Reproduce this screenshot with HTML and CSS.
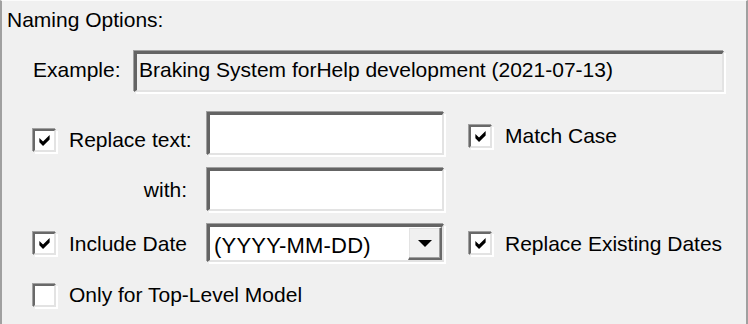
FILE: index.html
```html
<!DOCTYPE html>
<html>
<head>
<meta charset="utf-8">
<link rel="stylesheet" href="styles.css">
</head>
<body>
<div class="panel">
  <div class="title">Naming Options:</div>
  <div class="example-row">
    <span class="example-label">Example:</span>
    <div class="field field-readonly"><span class="field-text">Braking System forHelp development (2021-07-13)</span></div>
  </div>
  <div class="options">
    <div class="opt opt-replace">
      <span class="cb"><svg class="check" viewBox="0 0 7 7.5" width="11" height="11"><polygon points="0,2 2.5,4.5 7,0 7,3 2.5,7.5 0,5" fill="#000"/></svg></span>
      <span class="opt-label">Replace text:</span>
    </div>
    <div class="field input"></div>
    <div class="opt opt-right opt-match">
      <span class="cb"><svg class="check" viewBox="0 0 7 7.5" width="11" height="11"><polygon points="0,2 2.5,4.5 7,0 7,3 2.5,7.5 0,5" fill="#000"/></svg></span>
      <span class="opt-label">Match Case</span>
    </div>

    <div class="with-label">with:</div>
    <div class="field input"></div>
    <div class="empty"></div>

    <div class="opt opt-date">
      <span class="cb"><svg class="check" viewBox="0 0 7 7.5" width="11" height="11"><polygon points="0,2 2.5,4.5 7,0 7,3 2.5,7.5 0,5" fill="#000"/></svg></span>
      <span class="opt-label">Include Date</span>
    </div>
    <div class="field select">
      <span class="select-text">(YYYY-MM-DD)</span>
      <span class="select-btn"><span class="arrow"></span></span>
    </div>
    <div class="opt opt-right opt-dates">
      <span class="cb"><svg class="check" viewBox="0 0 7 7.5" width="11" height="11"><polygon points="0,2 2.5,4.5 7,0 7,3 2.5,7.5 0,5" fill="#000"/></svg></span>
      <span class="opt-label">Replace Existing Dates</span>
    </div>

    <div class="opt opt-top">
      <span class="cb"></span>
      <span class="opt-label">Only for Top-Level Model</span>
    </div>
  </div>
</div>
</body>
</html>
```
FILE: styles.css
```css
html, body {
  margin: 0;
  padding: 0;
  background: #f0f0f0;
}

body {
  font-family: "Liberation Sans", Arial, sans-serif;
  font-size: 21px;
  color: #000;
}

.panel {
  box-sizing: border-box;
  width: 748px;
  height: 324px;
  background: #f0f0f0;
  border-left: 2px solid #a0a0a0;
  border-right: 2px solid #a0a0a0;
  border-top: 1px solid #fbfbfb;
  padding-top: 7px;
  overflow: hidden;
}

.title {
  line-height: 24px;
  padding-left: 5px;
  white-space: nowrap;
}

.example-row {
  display: flex;
  align-items: center;
  margin-top: 19px;
  margin-left: 31px;
  height: 41px;
}

.example-label {
  width: 101px;
  line-height: 24px;
  margin-bottom: 3px;
  white-space: nowrap;
}

.field {
  box-sizing: border-box;
  border-top: 3px solid #646464;
  border-left: 3px solid #646464;
  border-bottom: 2px solid #e3e3e3;
  border-right: 2px solid #e3e3e3;
  box-shadow: -1px -1px 0 0 #a0a0a0, 2px 2px 0 0 #ffffff;
}

.field-readonly {
  width: 590px;
  height: 41px;
  background: #f0f0f0;
  display: flex;
  align-items: center;
  padding-left: 2px;
  padding-bottom: 4px;
}

.field-text {
  line-height: 24px;
  white-space: nowrap;
}

.options {
  display: grid;
  grid-template-columns: 174px 237px auto;
  grid-template-rows: 43px 43px 38px 32px;
  row-gap: 13px;
  margin-top: 20px;
  margin-left: 31px;
}

.input {
  width: 237px;
  height: 43px;
  background: #fff;
}

.opt {
  display: flex;
  align-items: center;
  gap: 13px;
  white-space: nowrap;
}

.opt-label {
  line-height: 24px;
}

.opt-right {
  margin-left: 25px;
}

.opt-replace {
  align-self: start;
  margin-top: 16px;
}

.opt-match {
  align-self: start;
  margin-top: 12px;
}

.with-label {
  align-self: center;
  justify-self: end;
  line-height: 24px;
  margin-right: 20px;
}

.opt-date,
.opt-dates {
  align-self: center;
  margin-top: 1px;
}

.opt-top {
  grid-column: 1 / span 3;
  align-self: end;
}

.cb {
  box-sizing: border-box;
  width: 23px;
  height: 23px;
  flex: none;
  background: #fff;
  border-top: 2px solid #696969;
  border-left: 2px solid #696969;
  border-bottom: 2px solid #e3e3e3;
  border-right: 2px solid #e3e3e3;
  box-shadow: -1px -1px 0 0 #a0a0a0, 2px 2px 0 0 #ffffff;
  display: flex;
  align-items: center;
  justify-content: center;
}

.check {
  display: block;
}

.select {
  width: 237px;
  height: 38px;
  background: #fff;
  display: flex;
  align-items: stretch;
}

.select-text {
  flex: 1;
  padding-left: 4px;
  font-size: 22px;
  letter-spacing: 0.2px;
  line-height: 33px;
  padding-top: 2px;
  white-space: nowrap;
}

.select-btn {
  box-sizing: border-box;
  width: 34px;
  flex: none;
  background: #f0f0f0;
  border-top: 1px solid #ffffff;
  border-left: 1px solid #ffffff;
  border-bottom: 2px solid #696969;
  border-right: 2px solid #696969;
  box-shadow: inset -1px -1px 0 0 #a0a0a0, inset 1px 1px 0 0 #e3e3e3;
  display: flex;
  align-items: center;
  justify-content: center;
}

.arrow {
  width: 0;
  height: 0;
  border-left: 7px solid transparent;
  border-right: 7px solid transparent;
  border-top: 7px solid #000;
  margin-top: 1px;
}
```
